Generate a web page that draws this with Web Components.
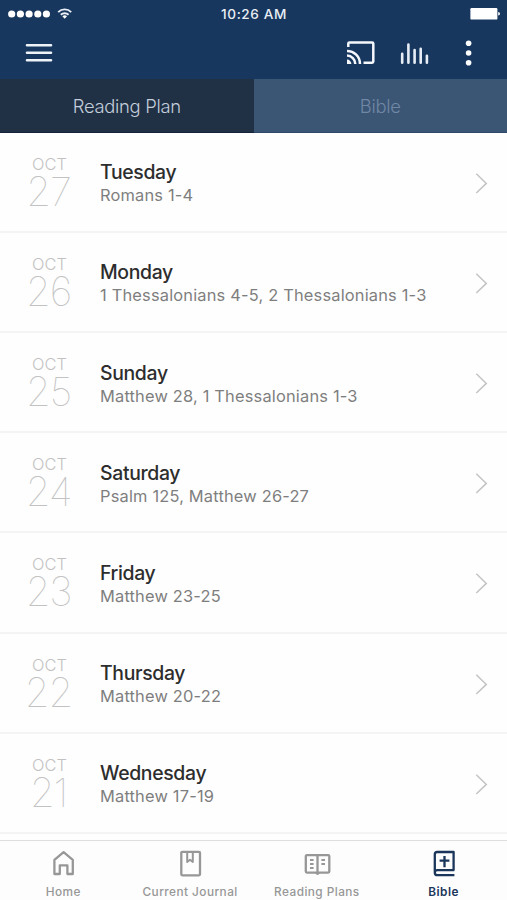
<!DOCTYPE html>
<html lang="en">
<head>
<meta charset="utf-8">
<meta name="viewport" content="width=device-width">
<title>Reading Plan</title>
<style>
    html, body {
        margin: 0;
        height: 100%;
    }
    body {
        font-family: Inter, "Liberation Sans", sans-serif;
        overflow: hidden;
    }
</style>
</head>
<body>

<journal-app>
    <status-bar slot="top" time="10:26 AM"></status-bar>
    <app-toolbar slot="top"></app-toolbar>
    <segment-tabs slot="top">
        <segment-tab active>Reading Plan</segment-tab>
        <segment-tab>Bible</segment-tab>
    </segment-tabs>

    <plan-row month="OCT" date="27" day="Tuesday">Romans 1-4</plan-row>
    <plan-row month="OCT" date="26" day="Monday">1 Thessalonians 4-5, 2 Thessalonians 1-3</plan-row>
    <plan-row month="OCT" date="25" day="Sunday">Matthew 28, 1 Thessalonians 1-3</plan-row>
    <plan-row month="OCT" date="24" day="Saturday">Psalm 125, Matthew 26-27</plan-row>
    <plan-row month="OCT" date="23" day="Friday">Matthew 23-25</plan-row>
    <plan-row month="OCT" date="22" day="Thursday">Matthew 20-22</plan-row>
    <plan-row month="OCT" date="21" day="Wednesday">Matthew 17-19</plan-row>

    <nav-bar slot="bottom">
        <nav-item icon="home">Home</nav-item>
        <nav-item icon="journal">Current Journal</nav-item>
        <nav-item icon="plans">Reading Plans</nav-item>
        <nav-item icon="bible" active>Bible</nav-item>
    </nav-bar>
</journal-app>

<script>
// Clone a template string into an open shadow root
function render(el, html) {
    const template = document.createElement('template');
    template.innerHTML = html;
    el.attachShadow({ mode: 'open' });
    el.shadowRoot.appendChild(template.content.cloneNode(true));
}

class JournalApp extends HTMLElement {
    constructor() {
        super();
        render(this, `
            <style>
                :host {
                    display: flex;
                    flex-direction: column;
                    height: 100%;
                    background: #fefefe;
                }
                header {
                    flex: none;
                    background: #18375e;
                }
                main {
                    flex: 1;
                    min-height: 0;
                    overflow: hidden;
                }
            </style>
            <header><slot name="top"></slot></header>
            <main><slot></slot></main>
            <slot name="bottom"></slot>
        `);
    }
}

// Phone status bar
class StatusBar extends HTMLElement {
    constructor() {
        super();
        render(this, `
            <style>
                :host {
                    display: grid;
                    grid-template-columns: 1fr auto 1fr;
                    align-items: center;
                    height: 27px;
                    padding: 0 7px 0 8px;
                    color: #e9eef5;
                    font-size: 13.6px;
                    font-weight: 500;
                    letter-spacing: 0.6px;
                }
                svg { display: block; }
                .battery { justify-self: end; }
            </style>
            <svg width="66" height="16" viewBox="0 0 66 16" fill="#fff">
                <circle cx="3.7" cy="8" r="3.6"/>
                <circle cx="12.4" cy="8" r="3.6"/>
                <circle cx="21.1" cy="8" r="3.6"/>
                <circle cx="29.8" cy="8" r="3.6"/>
                <circle cx="38.4" cy="8" r="3.6"/>
                <g fill="none" stroke="#e9eef5" stroke-width="1.9">
                    <path d="M50.2 6.1a9.2 9.2 0 0 1 13 0"/>
                    <path d="M52.8 8.8a5.6 5.6 0 0 1 7.8 0"/>
                </g>
                <path d="M56.7 12.8l-2.3-2.5a3.5 3.5 0 0 1 4.6 0z"/>
            </svg>
            <span></span>
            <svg class="battery" width="30" height="14" viewBox="0 0 30 14" fill="#fff">
                <rect x="0.4" y="1" width="27" height="11.6" rx="1.2"/>
                <path d="M28.2 5q1.8 0 1.8 1.8t-1.8 1.8z"/>
            </svg>
        `);
        this.shadowRoot.querySelector('span').innerText = this.getAttribute('time');
    }
}

// Menu button on the left, actions on the right
class AppToolbar extends HTMLElement {
    constructor() {
        super();
        render(this, `
            <style>
                :host {
                    display: flex;
                    align-items: center;
                    justify-content: space-between;
                    height: 52px;
                    padding: 0 33px 0 25px;
                    box-sizing: border-box;
                }
                .actions {
                    display: flex;
                    align-items: center;
                    gap: 25px;
                }
                svg { display: block; }
                .more { margin-left: 4px; }
            </style>
            <svg width="28" height="20" viewBox="0 0 28 20" stroke="#eef3f8" stroke-width="2.6" stroke-linecap="round">
                <path d="M2 2.2h24M2 9.8h24M2 17.2h24"/>
            </svg>
            <div class="actions">
                <svg width="29" height="26" viewBox="0 0 29 26" fill="none" stroke="#f4f7fb" stroke-width="2.5">
                    <path d="M2.3 7V3.6q0-1.2 1.2-1.2h22.6q1.2 0 1.2 1.2v18q0 1.2-1.2 1.2H17.5"/>
                    <path d="M1 10.9a13 13 0 0 1 13 13"/>
                    <path d="M1 15.6a8.3 8.3 0 0 1 8.300 8.300"/>
                    <path d="M1 19.600a4.400 4.400 0 0 1 4.400 4.400h-4.400z" fill="#f4f7fb" stroke="none"/>
                </svg>
                <svg width="29" height="26" viewBox="0 0 29 26" fill="none" stroke="#e6edf5" stroke-width="2.6" stroke-linecap="round">
                    <path d="M2.2 13.800v9M8.400 4.500v18.300M14.600 10v12.800M20.700 8.800v14M26.900 15.800v7"/>
                </svg>
                <svg class="more" width="16" height="26" viewBox="0 0 16 26" fill="#fff">
                    <circle cx="10.600" cy="3.200" r="2.800"/>
                    <circle cx="10.600" cy="13" r="2.800"/>
                    <circle cx="10.600" cy="22.700" r="2.800"/>
                </svg>
            </div>
        `);
    }
}

class SegmentTabs extends HTMLElement {
    constructor() {
        super();
        render(this, `
            <style>
                :host {
                    display: flex;
                    height: 53.6px;
                }
            </style>
            <slot></slot>
        `);
    }
}

class SegmentTab extends HTMLElement {
    constructor() {
        super();
        render(this, `
            <style>
                :host {
                    flex: 1;
                    display: flex;
                    align-items: center;
                    justify-content: center;
                    padding-top: 2px;
                    background: #3b5575;
                    color: #7087a4;
                    font-size: 18.4px;
                    font-weight: 300;
                    letter-spacing: -0.3px;
                    border-bottom: 1px solid #2e4969;
                    box-sizing: border-box;
                }
                :host([active]) {
                    background: #213145;
                    color: #c3cddb;
                    border-color: #14233a;
                }
            </style>
            <slot></slot>
        `);
    }
}

// One day of the plan
class PlanRow extends HTMLElement {
    constructor() {
        super();
        render(this, `
            <style>
                :host {
                    display: flex;
                    align-items: center;
                    height: 100.2px;
                    padding-right: 18px;
                    box-sizing: border-box;
                    border-bottom: 2px solid #f4f4f4;
                }
                .date {
                    flex: none;
                    width: 99px;
                    margin-right: 1px;
                    text-align: center;
                    color: #c2c2c2;
                }
                .month {
                    font-size: 16.4px;
                    font-weight: 300;
                    line-height: 20px;
                }
                .num {
                    padding-right: 2px;
                    font-size: 40px;
                    font-weight: 100;
                    line-height: 36px;
                    letter-spacing: -1.2px;
                }
                .text {
                    flex: 1;
                    padding-top: 4px;
                }
                .day {
                    color: #2d2d2d;
                    font-size: 19.4px;
                    font-weight: 500;
                    line-height: 24px;
                    letter-spacing: -0.33px;
                }
                .passage {
                    color: #7e7e7e;
                    font-size: 16.4px;
                    line-height: 23px;
                    letter-spacing: 0.19px;
                }
                svg {
                    display: block;
                    margin-top: 2px;
                }
            </style>
            <div class="date">
                <div class="month"></div>
                <div class="num"></div>
            </div>
            <div class="text">
                <div class="day"></div>
                <div class="passage"><slot></slot></div>
            </div>
            <svg width="14" height="22" viewBox="0 0 14 22" fill="none" stroke="#c4c4c4" stroke-width="1.5">
                <path d="M1.3 1.8l10 9.6-10 9.6"/>
            </svg>
        `);
        this.shadowRoot.querySelector('.month').innerText = this.getAttribute('month');
        this.shadowRoot.querySelector('.num').innerText = this.getAttribute('date');
        this.shadowRoot.querySelector('.day').innerText = this.getAttribute('day');
    }
}

class NavBar extends HTMLElement {
    constructor() {
        super();
        render(this, `
            <style>
                :host {
                    display: flex;
                    flex: none;
                    height: 60px;
                    box-sizing: border-box;
                    border-top: 1px solid #dedede;
                    background: #fdfdfd;
                }
            </style>
            <slot></slot>
        `);
    }
}

const icons = {
    home: `<path d="M5.4 25V10.8L14.6 3.2l9.200 7.600V25h-5.400v-8.600h-7.600V25z"/>`,
    journal: `<rect x="5.3" y="2.8" width="18.7" height="23.500" rx="1"/>
        <path d="M11.200 3v10l2.800-2.200 2.800 2.200v-10" stroke-width="2"/>`,
    plans: `<path d="M14.5 6.200H3.800q-1 0-1 1V22.600q0 1 1 1H12.500l2 1.200 2-1.200h8.800q1 0 1-1V7.200q0-1-1-1zV24"/>
        <path d="M7 11h3.600M7 15h3.600M7 19h3.600M18.400 11h3.600M18.400 15h3.600" stroke-width="1.900"/>`,
    bible: `<path d="M23.600 21.200V3H7.200q-2.400 0-2.400 2.400v18.300M24.400 21.200H7.500q-2.700 0-2.700 2.500 0 2.500 2.700 2.500H24.400"/>
        <path d="M14.500 7v11.200M9.600 11.600h9.800"/>`
};

class NavItem extends HTMLElement {
    constructor() {
        super();
        render(this, `
            <style>
                :host {
                    flex: 1;
                    display: flex;
                    flex-direction: column;
                    align-items: center;
                    padding-top: 8px;
                    color: #979797;
                    font-size: 11.8px;
                    font-weight: 500;
                    line-height: 16px;
                    letter-spacing: 0.45px;
                }
                :host([active]) {
                    color: #1b365b;
                    font-weight: 600;
                }
                svg {
                    display: block;
                    margin-bottom: 7px;
                }
            </style>
            <svg width="28" height="28" viewBox="0 0 28 28" fill="none" stroke="currentColor" stroke-width="2.3" stroke-linejoin="round">
                ${icons[this.getAttribute('icon')]}
            </svg>
            <slot></slot>
        `);
    }
}

// Define custom elements
window.customElements.define('journal-app', JournalApp);
window.customElements.define('status-bar', StatusBar);
window.customElements.define('app-toolbar', AppToolbar);
window.customElements.define('segment-tabs', SegmentTabs);
window.customElements.define('segment-tab', SegmentTab);
window.customElements.define('plan-row', PlanRow);
window.customElements.define('nav-bar', NavBar);
window.customElements.define('nav-item', NavItem);
</script>
</body>
</html>
